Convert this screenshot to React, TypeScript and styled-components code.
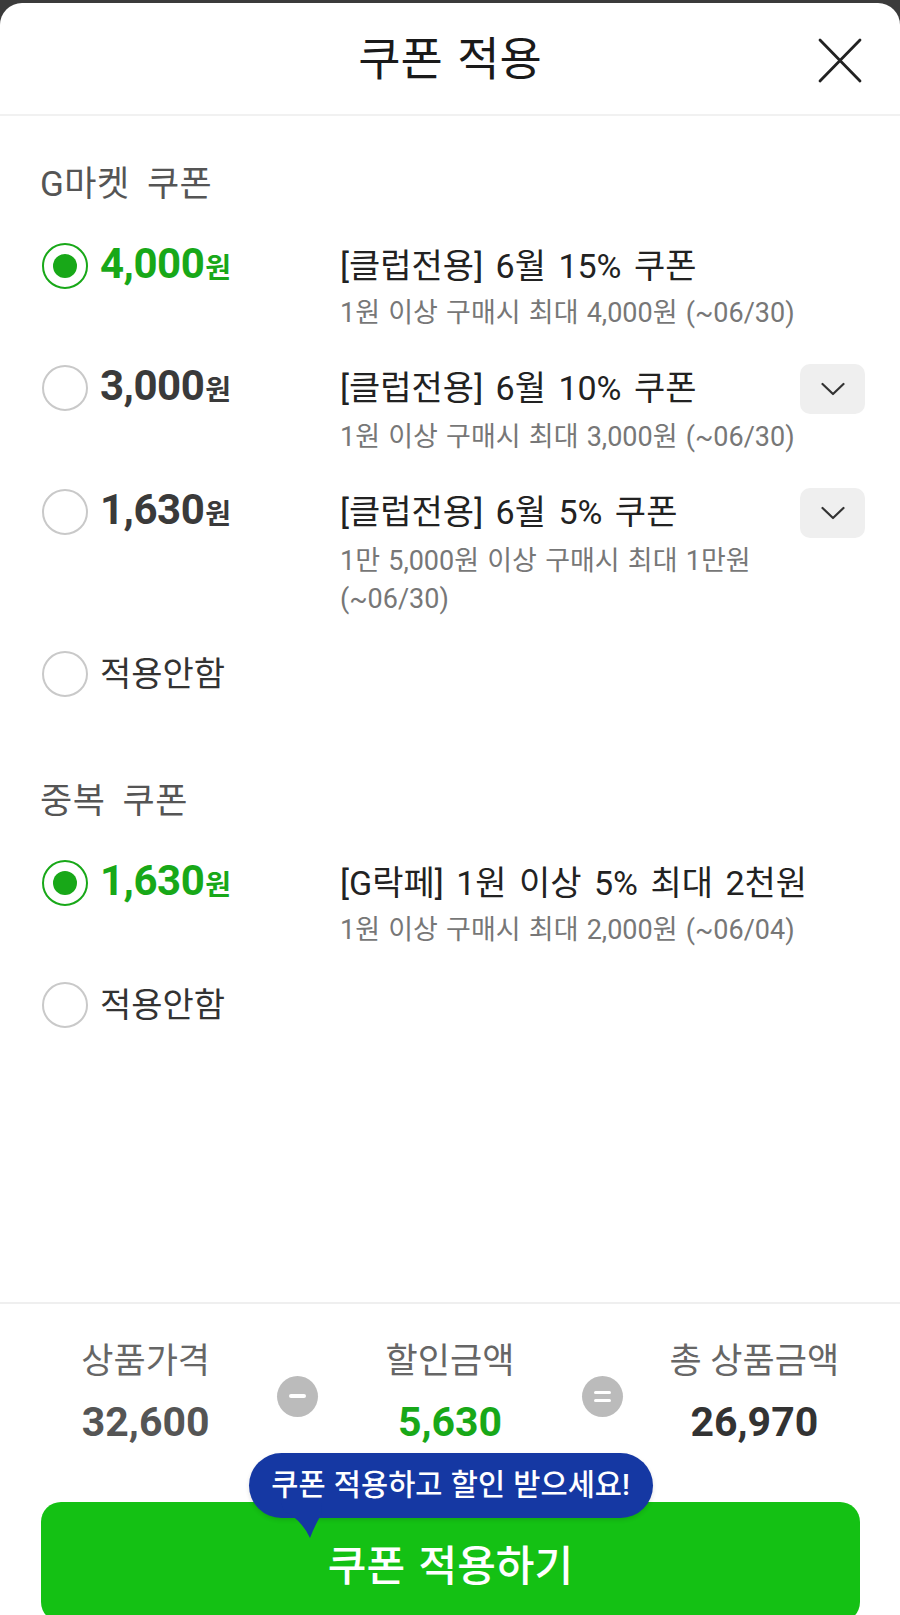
import React from "react";
import styled, { createGlobalStyle } from "styled-components";

const GlobalStyle = createGlobalStyle`
  html, body {
    margin: 0;
    padding: 0;
    background: #3b3b3b;
  }
  * {
    box-sizing: border-box;
  }
  body {
    font-family: Roboto, "Noto Sans CJK KR", sans-serif;
  }
`;

const GREEN = "#18a818";

const Page = styled.div`
  width: 900px;
  height: 1615px;
  overflow: hidden;
  padding-top: 3px;
  background: #3b3b3b;
`;

const Sheet = styled.div`
  height: 1619px;
  background: #fff;
  border-radius: 22px 22px 0 0;
  display: flex;
  flex-direction: column;
`;

const Header = styled.header`
  flex-shrink: 0;
  height: 113px;
  border-bottom: 2px solid #f1f1f1;
  display: grid;
  grid-template-columns: 1fr auto 1fr;
  align-items: center;
  padding: 0 38px;
`;

const Title = styled.h1`
  grid-column: 2;
  margin: 0;
  font-size: 46px;
  font-weight: 400;
  word-spacing: 3px;
  color: #1a1a1a;
  line-height: 56px;
`;

const CloseButton = styled.button`
  grid-column: 3;
  justify-self: end;
  width: 44px;
  height: 45px;
  padding: 0;
  border: none;
  background: none;
  display: flex;
  margin-top: 3px;
`;

const Content = styled.main`
  flex: 1;
  padding: 49px 35px 0 40px;
`;

const Section = styled.section`
  & + & {
    margin-top: 84px;
  }
`;

const SectionTitle = styled.h2`
  margin: 0 0 37px;
  font-size: 35px;
  font-weight: 400;
  word-spacing: 8px;
  letter-spacing: 0.5px;
  line-height: 40px;
  color: #555;
`;

const List = styled.div`
  display: flex;
  flex-direction: column;
  gap: 32px;
`;

const Row = styled.label`
  display: grid;
  grid-template-columns: 300px 1fr 65px;
  align-items: start;
`;

const Choice = styled.div`
  grid-column: 1;
  grid-row: 1;
  height: 48px;
  display: flex;
  align-items: center;
  gap: 12px;
  padding-left: 2px;
`;

const Radio = styled.span<{ $on?: boolean }>`
  width: 46px;
  height: 46px;
  border-radius: 50%;
  border: ${(p) => (p.$on ? `2.5px solid ${GREEN}` : "2px solid #c9c9c9")};
  display: flex;
  align-items: center;
  justify-content: center;
  flex-shrink: 0;
  &::after {
    content: "";
    width: 24px;
    height: 24px;
    border-radius: 50%;
    background: ${GREEN};
    display: ${(p) => (p.$on ? "block" : "none")};
  }
`;

const Price = styled.span<{ $on?: boolean }>`
  font-family: Roboto, "Noto Sans CJK KR", sans-serif;
  font-size: 42px;
  font-weight: 700;
  letter-spacing: -0.5px;
  line-height: 48px;
  color: ${(p) => (p.$on ? GREEN : "#3a3a3a")};
  small {
    font-size: 28px;
    font-weight: 700;
    margin-left: 1px;
  }
`;

const NoneLabel = styled.span`
  font-size: 34px;
  line-height: 48px;
  color: #333;
`;

const CouponName = styled.div`
  grid-column: 2;
  grid-row: 1;
  font-size: 34px;
  word-spacing: 4px;
  line-height: 48px;
  color: #222;
  white-space: nowrap;
`;

const ToggleButton = styled.button`
  grid-column: 3;
  grid-row: 1;
  width: 65px;
  height: 50px;
  align-self: center;
  border: none;
  border-radius: 10px;
  background: #efefef;
  display: flex;
  align-items: center;
  justify-content: center;
  padding: 0;
`;

const CouponDesc = styled.div`
  grid-column: 2 / span 2;
  grid-row: 2;
  margin-top: 4px;
  font-size: 27px;
  word-spacing: 1.5px;
  line-height: 38px;
  color: #777;
  white-space: nowrap;
`;

const Footer = styled.footer`
  flex-shrink: 0;
  height: 320px;
  border-top: 2px solid #efefef;
  padding-top: 36px;
`;

const Summary = styled.div`
  display: grid;
  grid-template-columns: 1fr 41px 1fr 41px 1fr;
  padding: 0 14px;
`;

const SummaryCol = styled.div`
  text-align: center;
`;

const SummaryLabel = styled.div`
  font-size: 35px;
  line-height: 44px;
  color: #666;
`;

const SummaryValue = styled.div<{ $color: string }>`
  margin-top: 14px;
  font-size: 41px;
  font-weight: 700;
  line-height: 48px;
  color: ${(p) => p.$color};
`;

const Operator = styled.div`
  align-self: center;
  margin-top: 6px;
  width: 41px;
  height: 41px;
  border-radius: 50%;
  background: #bbbbbb;
  display: flex;
  flex-direction: column;
  align-items: center;
  justify-content: center;
  gap: 5px;
`;

const Bar = styled.span<{ $h: number }>`
  width: 17px;
  height: ${(p) => p.$h}px;
  border-radius: 2px;
  background: #fff;
`;

const ButtonWrap = styled.div`
  position: relative;
  margin: 56px 40px 0 41px;
`;

const ApplyButton = styled.button`
  width: 100%;
  height: 120px;
  border: none;
  border-radius: 20px;
  background: #14c114;
  color: #fff;
  font-family: Roboto, "Noto Sans CJK KR", sans-serif;
  font-size: 42px;
  font-weight: 500;
  word-spacing: 3px;
  display: flex;
  align-items: center;
  justify-content: center;
`;

const Bubble = styled.div`
  position: absolute;
  top: -49px;
  left: 50%;
  transform: translateX(-50%);
  width: 404px;
  height: 65px;
  border-radius: 33px;
  background: #1538a3;
  color: #fff;
  font-size: 29.5px;
  font-weight: 500;
  word-spacing: 1px;
  line-height: 65px;
  text-align: center;
  white-space: nowrap;
  box-shadow: 0 2px 4px rgba(0, 0, 0, 0.12);
  z-index: 2;
`;

const Tail = styled.svg`
  position: absolute;
  left: 32px;
  top: 50px;
`;

const coupons = [
  {
    id: 1,
    amount: "4,000",
    name: "[클럽전용] 6월 15% 쿠폰",
    desc: ["1원 이상 구매시 최대 4,000원 (~06/30)"],
    on: true,
    toggle: false,
  },
  {
    id: 2,
    amount: "3,000",
    name: "[클럽전용] 6월 10% 쿠폰",
    desc: ["1원 이상 구매시 최대 3,000원 (~06/30)"],
    on: false,
    toggle: true,
  },
  {
    id: 3,
    amount: "1,630",
    name: "[클럽전용] 6월 5% 쿠폰",
    desc: ["1만 5,000원 이상 구매시 최대 1만원", "(~06/30)"],
    on: false,
    toggle: true,
  },
];

const extraCoupons = [
  {
    id: 4,
    amount: "1,630",
    name: "[G락페] 1원 이상 5% 최대 2천원",
    desc: ["1원 이상 구매시 최대 2,000원 (~06/04)"],
    on: true,
    toggle: false,
  },
];

const Chevron = () => (
  <svg width="24" height="14" viewBox="0 0 24 14">
    <polyline
      points="1.5,2 12,12 22.5,2"
      fill="none"
      stroke="#333"
      strokeWidth="2.2"
      strokeLinecap="round"
      strokeLinejoin="round"
    />
  </svg>
);

const CouponRow = ({ c }) => (
  <Row>
    <Choice>
      <Radio $on={c.on} />
      <Price $on={c.on}>
        {c.amount}
        <small>원</small>
      </Price>
    </Choice>
    <CouponName>{c.name}</CouponName>
    {c.toggle && (
      <ToggleButton type='button'>
        <Chevron />
      </ToggleButton>
    )}
    <CouponDesc>
      {c.desc.map((line, idx) => (
        <div key={`desc-${idx}`}>{line}</div>
      ))}
    </CouponDesc>
  </Row>
);

const NoneRow = () => (
  <Row>
    <Choice>
      <Radio />
      <NoneLabel>적용안함</NoneLabel>
    </Choice>
  </Row>
);

const App = () => {
  return (
    <Page>
      <GlobalStyle />
      <Sheet>
        <Header>
          <Title>쿠폰 적용</Title>
          <CloseButton type='button' aria-label='닫기'>
            <svg width="44" height="45" viewBox="0 0 44 45">
              <path
                d="M2 2 L42 43 M42 2 L2 43"
                stroke="#222"
                strokeWidth="2.8"
                strokeLinecap="round"
              />
            </svg>
          </CloseButton>
        </Header>
        <Content>
          <Section>
            <SectionTitle>G마켓 쿠폰</SectionTitle>
            <List>
              {coupons.map((c) => (
                <CouponRow key={c.id} c={c} />
              ))}
              <NoneRow />
            </List>
          </Section>
          <Section>
            <SectionTitle>중복 쿠폰</SectionTitle>
            <List>
              {extraCoupons.map((c) => (
                <CouponRow key={c.id} c={c} />
              ))}
              <NoneRow />
            </List>
          </Section>
        </Content>
        <Footer>
          <Summary>
            <SummaryCol>
              <SummaryLabel>상품가격</SummaryLabel>
              <SummaryValue $color='#555'>32,600</SummaryValue>
            </SummaryCol>
            <Operator>
              <Bar $h={4} />
            </Operator>
            <SummaryCol>
              <SummaryLabel>할인금액</SummaryLabel>
              <SummaryValue $color={GREEN}>5,630</SummaryValue>
            </SummaryCol>
            <Operator>
              <Bar $h={3} />
              <Bar $h={3} />
            </Operator>
            <SummaryCol>
              <SummaryLabel>총 상품금액</SummaryLabel>
              <SummaryValue $color='#333'>26,970</SummaryValue>
            </SummaryCol>
          </Summary>
          <ButtonWrap>
            <Bubble>
              쿠폰 적용하고 할인 받으세요!
              <Tail width="42" height="36" viewBox="0 0 42 36">
                <path d="M0 0 L41 0 L40 12 Q 34 22 29 35 Q 20 16 3 8 Z" fill="#1538a3" />
              </Tail>
            </Bubble>
            <ApplyButton type='button'>쿠폰 적용하기</ApplyButton>
          </ButtonWrap>
        </Footer>
      </Sheet>
    </Page>
  );
};

export default App;
